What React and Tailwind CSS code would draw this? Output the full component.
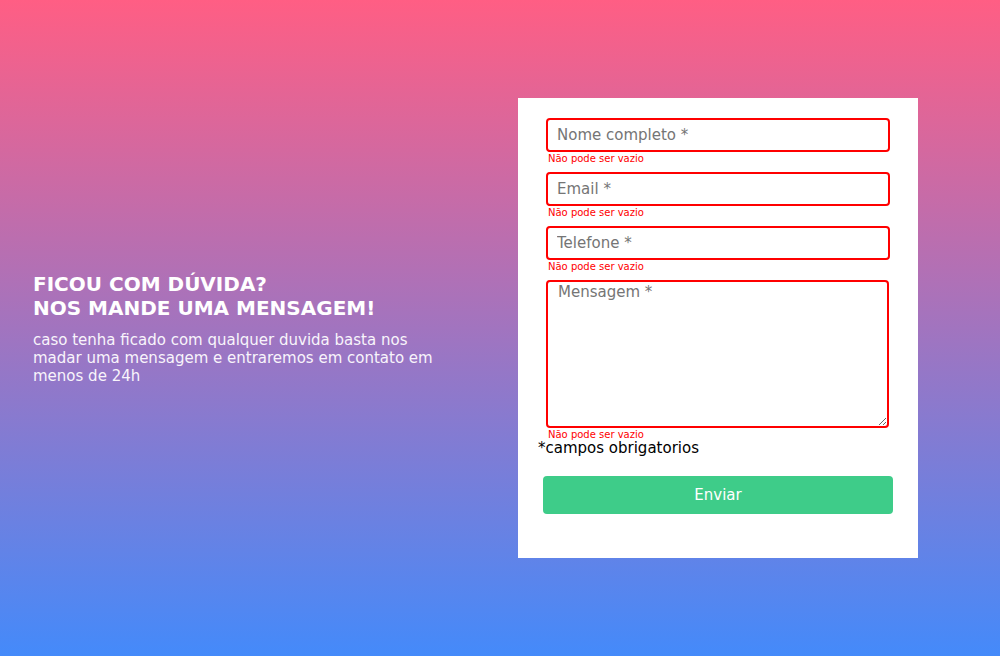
import React from "react";

function Field({ placeholder }) {
  return (
    <div className="mb-[7px]">
      <input
        placeholder={placeholder}
        className="block w-[344px] h-[34px] border-2 border-[#ff0000] rounded-[4px] px-[9px] text-[15px] text-black placeholder:text-[#757575] outline-none bg-white"
      />
      <div className="mt-[1px] text-[10px] leading-[12px] text-[#ff0000] pl-[2px]">Não pode ser vazio</div>
    </div>
  );
}

export default function App() {
  return (
    <div
      className="w-[1000px] h-[656px] flex items-center bg-[linear-gradient(#ff5e84,#448afa)]"
      style={{ fontFamily: '"DejaVu Sans", sans-serif' }}
    >
      <div className="ml-[33px] w-[440px] text-white">
        <h1 className="text-[20px] leading-[24px] font-bold">
          FICOU COM DÚVIDA?
          <br />
          NOS MANDE UMA MENSAGEM!
        </h1>
        <p className="mt-[11px] w-[420px] text-[15px] leading-[18px] text-[#f8f4fb]">
          caso tenha ficado com qualquer duvida basta nos madar uma mensagem e entraremos em contato em menos de 24h
        </p>
      </div>
      <div className="ml-[45px] w-[400px] h-[460px] bg-white pt-[20px] px-[20px]">
        <div className="pl-[8px]">
          <Field placeholder="Nome completo *" />
          <Field placeholder="Email *" />
          <Field placeholder="Telefone *" />
          <div>
            <textarea
              placeholder="Mensagem *"
              className="block w-[343px] h-[148px] border-2 border-[#ff0000] rounded-[4px] px-[10px] pt-[1px] text-[15px] leading-[18px] text-black placeholder:text-[#757575] outline-none bg-white"
            />
            <div className="mt-[1px] text-[10px] leading-[12px] text-[#ff0000] pl-[2px]">Não pode ser vazio</div>
          </div>
        </div>
        <div className="text-[15px] leading-[15px] text-black">*campos obrigatorios</div>
        <button className="mt-[20px] ml-[5px] w-[350px] h-[38px] rounded-[4px] bg-[#3ecc89] text-white text-[15px]">
          Enviar
        </button>
      </div>
    </div>
  );
}
